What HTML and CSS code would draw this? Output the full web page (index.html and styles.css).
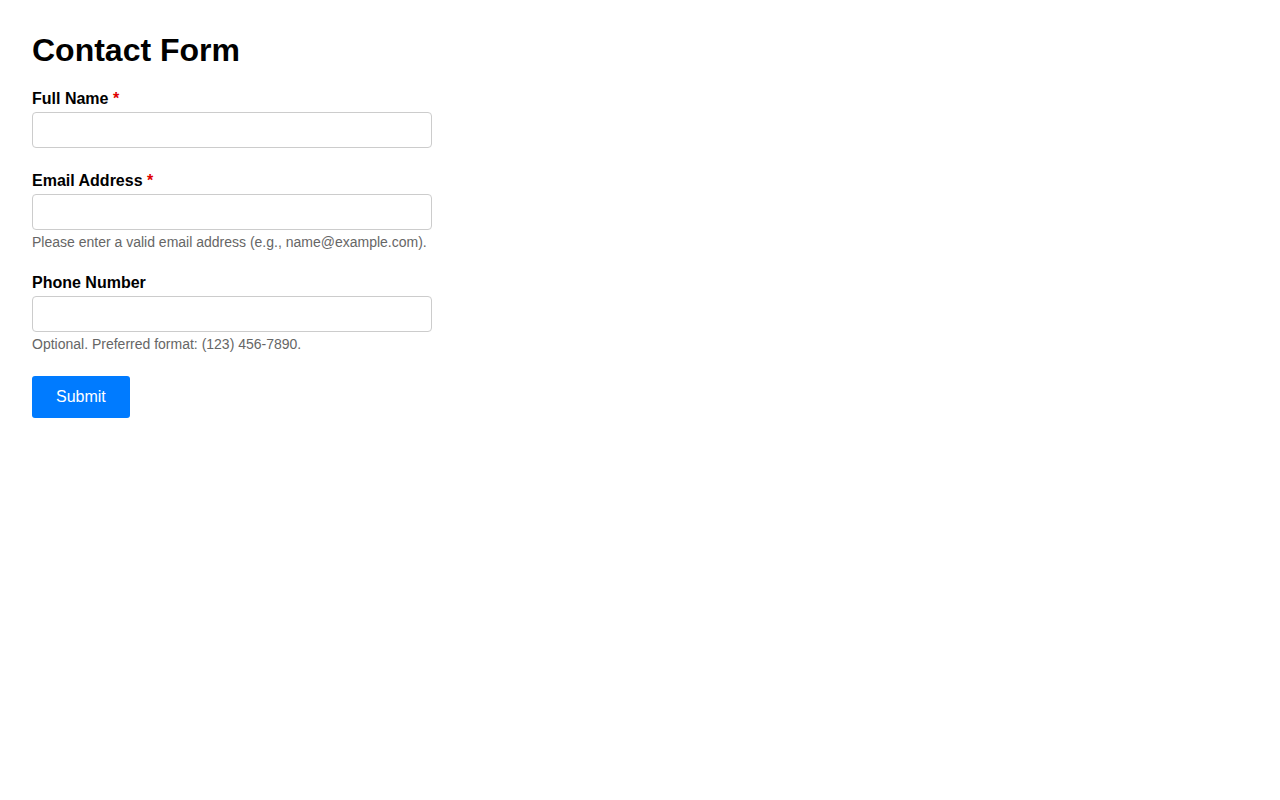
FILE: index.html
```html
<!DOCTYPE html>
<html lang="en">
  <head>
    <meta charset="UTF-8" />
    <meta name="viewport" content="width=device-width, initial-scale=1.0" />
    <title>Contact Form</title>
    <link rel="stylesheet" href="styles.css">
  </head>
  <body>
    <h1>Contact Form</h1>
    <form class="contact-form" novalidate>
      <div class="field">
        <label for="full-name">Full Name <span class="required">*</span></label>
        <input type="text" id="full-name" name="full-name" required />
      </div>
      <div class="field">
        <label for="email">Email Address <span class="required">*</span></label>
        <input type="email" id="email" name="email" required />
        <p class="hint">Please enter a valid email address (e.g., name@example.com).</p>
      </div>
      <div class="field">
        <label for="phone">Phone Number</label>
        <input type="tel" id="phone" name="phone" />
        <p class="hint">Optional. Preferred format: (123) 456-7890.</p>
      </div>
      <button type="submit" class="submit">Submit</button>
    </form>
  </body>
</html>
```
FILE: styles.css
```css
body {
  margin: 0;
  padding: 32px;
  font-family: "Liberation Sans", Arial, Helvetica, sans-serif;
  color: #000;
  background: #fff;
}

h1 {
  font-size: 32px;
  margin: 0 0 21px;
}

.contact-form {
  width: 400px;
}

.field {
  margin-bottom: 24px;
}

.field label {
  display: block;
  font-size: 16px;
  font-weight: bold;
  margin-bottom: 4px;
}

.required {
  color: #e00000;
}

.field input {
  display: block;
  box-sizing: border-box;
  width: 400px;
  height: 36px;
  padding: 8px;
  font-family: inherit;
  font-size: 16px;
  border: 1px solid #ccc;
  border-radius: 4px;
}

.hint {
  margin: 4px 0 0;
  font-size: 14px;
  color: #666;
}

.submit {
  background-color: #007bff;
  color: #fff;
  border: none;
  border-radius: 3px;
  padding: 12px 24px;
  font-family: inherit;
  font-size: 16px;
  cursor: pointer;
}
```
